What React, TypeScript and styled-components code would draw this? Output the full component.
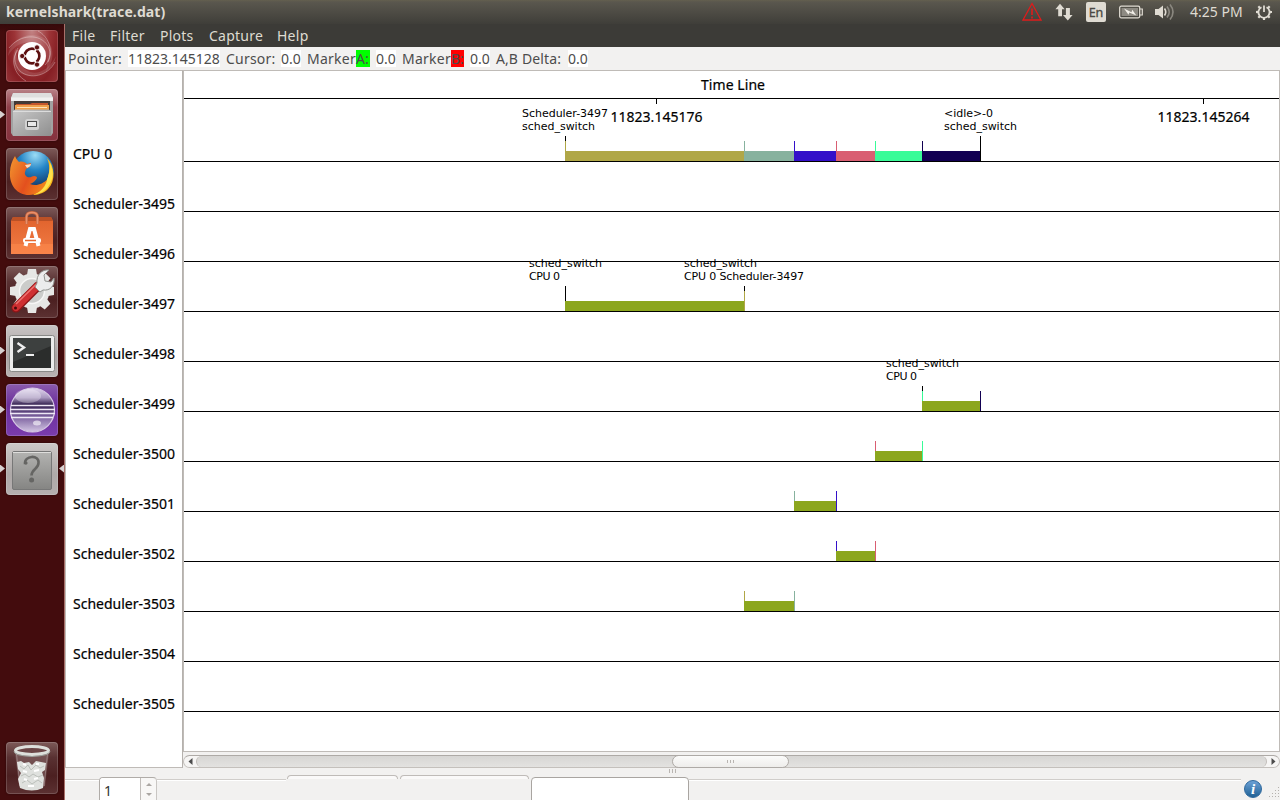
import React from "react";
import styled, { createGlobalStyle } from "styled-components";

const Global = createGlobalStyle`
  * { box-sizing: border-box; }
  body { margin: 0; overflow: hidden; background: #f2f1f0; }
  body, input { font-family: "Noto Sans", "Open Sans", sans-serif; font-size: 14px; }
`;

const Desktop = styled.div`
  width: 1280px;
  height: 800px;
  display: flex;
  flex-direction: column;
  overflow: hidden;
`;

const TopPanel = styled.header`
  height: 24px;
  flex: none;
  display: flex;
  align-items: center;
  justify-content: space-between;
  padding: 0 7px 0 6px;
  background: linear-gradient(#64604f 0, #5a574e 2px, #3f3e39 100%);
  color: #dfdbd2;
`;

const WindowTitle = styled.div`
  font-weight: 700;
  line-height: 24px;
  letter-spacing: 0.1px;
`;

const Indicators = styled.div`
  display: flex;
  align-items: center;
  height: 24px;
`;

const Indicator = styled.svg<{ $gap: number }>`
  display: block;
  flex: none;
  margin-right: ${(p) => p.$gap}px;
`;

const Keyboard = styled.div`
  width: 20px;
  height: 20px;
  margin-right: 13px;
  border-radius: 2px;
  background: #dfdbd2;
  color: #4a4842;
  font-size: 12.5px;
  line-height: 21px;
  text-align: center;
  -webkit-text-stroke: 0.3px #4a4842;
`;

const Clock = styled.div`
  width: 53px;
  margin-right: 12px;
  line-height: 24px;
  letter-spacing: 0;
  white-space: nowrap;
`;

const Body = styled.div`
  flex: 1;
  display: flex;
  min-height: 0;
`;

const Dock = styled.nav`
  width: 65px;
  flex: none;
  display: flex;
  flex-direction: column;
  gap: 7px;
  padding: 6px 0 6px 0;
  background: linear-gradient(#35090a 0, #430c0d 8px, #430c0d 100%);
  border-right: 1px solid #a9706a;
`;

const Launcher = styled.div<{ $last?: boolean }>`
  display: flex;
  align-items: center;
  height: 52px;
  flex: none;
  margin-top: ${(p) => (p.$last ? "auto" : 0)};
`;

const Arrow = styled.i<{ $side: "left" | "right"; $on?: boolean }>`
  width: ${(p) => (p.$side === "left" ? 5 : 5)}px;
  margin-right: ${(p) => (p.$side === "left" ? 1 : 0)}px;
  margin-left: ${(p) => (p.$side === "right" ? 1 : 0)}px;
  height: 8px;
  margin-top: -1px;
  clip-path: ${(p) => (p.$side === "left" ? "polygon(0 0,100% 50%,0 100%)" : "polygon(100% 0,0 50%,100% 100%)")};
  background: ${(p) => (p.$on ? "#d6d0d0" : "transparent")};
`;

const Tile = styled.div<{ $bg: string }>`
  width: 52px;
  height: 52px;
  flex: none;
  border-radius: 4px;
  background: ${(p) => p.$bg};
  box-shadow: inset 0 0 0 1px rgba(255, 255, 255, 0.16), 0 0 2px rgba(0, 0, 0, 0.5);
  svg { display: block; }
`;

const Window = styled.main`
  flex: 1;
  min-width: 0;
  display: flex;
  flex-direction: column;
  background: #f2f1f0;
`;

const MenuBar = styled.div`
  height: 23px;
  flex: none;
  display: flex;
  padding-left: 7px;
  background: #3c3b37;
  color: #dfdbd2;
`;

const MenuItem = styled.div<{ $w: number }>`
  width: ${(p) => p.$w}px;
  line-height: 23px;
  letter-spacing: 0.25px;
`;

const InfoBar = styled.div`
  height: 23px;
  flex: none;
  display: flex;
  align-items: center;
  padding-left: 3px;
  color: #4c4c4c;
`;

const Info = styled.span<{ $w: number; $gap?: number; $bg?: string; $ls?: number }>`
  width: ${(p) => p.$w}px;
  margin-right: ${(p) => p.$gap ?? 0}px;
  height: 17px;
  line-height: 17px;
  background: ${(p) => p.$bg ?? "transparent"};
  letter-spacing: ${(p) => p.$ls ?? 0}px;
  white-space: nowrap;
`;

const Trace = styled.div`
  display: flex;
  height: 698px;
  flex: none;
`;

const Names = styled.div`
  width: 118px;
  flex: none;
  padding: 58px 0 0 7px;
  border: 1px solid #bfbbb7;
  border-right-color: #b5b1ad;
  background: #fff;
  color: #000;
`;

const Name = styled.div`
  height: 50px;
  line-height: 50px;
  -webkit-text-stroke: 0.2px #000;
  white-space: nowrap;
`;

const PlotColumn = styled.div`
  flex: 1;
  display: flex;
  flex-direction: column;
`;

const PlotFrame = styled.div`
  height: 682px;
  border: 1px solid #bfbbb7;
  background: #fff;
  svg { display: block; }
`;

const ScrollBar = styled.div`
  height: 13px;
  margin-top: 3px;
  display: flex;
  border: 1px solid #c4c0bc;
  border-top-color: #aeaaa6;
  border-radius: 7px;
  background: #f6f5f4;
`;

const Step = styled.div`
  width: 12px;
  flex: none;
  display: flex;
  align-items: center;
  justify-content: center;
`;

const Trough = styled.div`
  flex: 1;
  padding-left: 475px;
  border-radius: 6px;
  border: solid #c2beba;
  border-width: 0 1px;
  background: linear-gradient(#d7d6d4, #e3e2e0);
`;

const Thumb = styled.div`
  width: 117px;
  height: 13px;
  margin-top: -1px;
  display: flex;
  align-items: center;
  justify-content: center;
  gap: 2px;
  border: 1px solid #aeaaa6;
  border-radius: 7px;
  background: linear-gradient(#fbfbfa, #eeedeb);
`;

const Ridge = styled.i<{ $h: number }>`
  width: 1px;
  height: ${(p) => p.$h}px;
  background: #b9b5b1;
`;

const Splitter = styled.div`
  height: 7px;
  flex: none;
  display: flex;
  justify-content: center;
  gap: 2px;
  padding-top: 1px;
`;

const Footer = styled.div`
  flex: 1;
  display: flex;
  align-items: flex-start;
`;

const Rule = styled.div<{ $w: number }>`
  width: ${(p) => p.$w}px;
  margin-top: 4px;
  height: 2px;
  border-top: 1px solid #d0cdca;
  background: #fff;
`;

const Spin = styled.div`
  width: 58px;
  height: 30px;
  margin-top: 2px;
  display: flex;
  border: 1px solid #b0aca8;
  border-right-color: #c9c6c3;
  border-radius: 4px;
  background: #f8f7f6;
`;

const SpinValue = styled.div`
  width: 41px;
  padding-left: 4px;
  line-height: 25px;
  border-right: 1px solid #c0bcb9;
  border-radius: 3px 0 0 3px;
  background: #fff;
  color: #333;
`;

const Spinners = styled.div`
  flex: 1;
  display: flex;
  flex-direction: column;
  align-items: center;
  gap: 7px;
  padding-top: 5px;
`;

const TabTop = styled.div<{ $w: number }>`
  width: ${(p) => p.$w}px;
  height: 4px;
  margin: 0 1px;
  border: 1px solid #bfbbb8;
  border-bottom: 0;
  border-radius: 4px 4px 0 0;
  background: #faf9f9;
`;

const Entry = styled.div`
  width: 158px;
  height: 30px;
  margin: 2px 0 0 1px;
  border: 1px solid #a9a5a1;
  border-radius: 4px;
  background: #fff;
`;

const rows = ["CPU 0", ...Array.from({ length: 11 }, (_, i) => `Scheduler-${3495 + i}`)];

const olive = "#b0a747";
const sage = "#87b29e";
const blue = "#3410c9";
const rose = "#d95e72";
const mint = "#38fc98";
const navy = "#120052";
const task = "#8ca61e";

type Bar = { row: number; from: number; to: number; fill: string; start: string; end?: string };

const bars: Bar[] = [
  { row: 0, from: 565, to: 744, fill: olive, start: olive },
  { row: 0, from: 744, to: 794, fill: sage, start: sage },
  { row: 0, from: 794, to: 836, fill: blue, start: blue },
  { row: 0, from: 836, to: 875, fill: rose, start: rose },
  { row: 0, from: 875, to: 922, fill: mint, start: mint },
  { row: 0, from: 922, to: 980, fill: navy, start: navy, end: "#000" },
  { row: 3, from: 565, to: 744, fill: task, start: "#000", end: olive },
  { row: 5, from: 922, to: 980, fill: task, start: mint, end: navy },
  { row: 6, from: 875, to: 922, fill: task, start: rose, end: mint },
  { row: 7, from: 794, to: 836, fill: task, start: sage, end: blue },
  { row: 8, from: 836, to: 875, fill: task, start: blue, end: rose },
  { row: 9, from: 744, to: 794, fill: task, start: olive, end: sage },
];

// Short black stems join an event to its caption.
const stems = [
  [565, 136], [980, 136], [565, 286], [744, 286], [922, 386],
];

const captions: [number, number, string, number][] = [
  [522, 117, "Scheduler-3497", 86],
  [522, 130, "sched_switch", 73],
  [944, 117, "<idle>-0", 49],
  [944, 130, "sched_switch", 73],
  [529, 267, "sched_switch", 73],
  [529, 280, "CPU 0", 31],
  [684, 267, "sched_switch", 73],
  [684, 280, "CPU 0 Scheduler-3497", 120],
  [886, 367, "sched_switch", 73],
  [886, 380, "CPU 0", 31],
];

const baseline = (row: number) => 161 + row * 50;

function Timeline() {
  return (
    <svg width="1095" height="680" viewBox="184 71 1095 680">
      <g fontSize="14" fill="#000" stroke="#000" strokeWidth=".2">
        <text x="701" y="90" textLength="64">Time Line</text>
        <text x="610.5" y="122" textLength="92">11823.145176</text>
        <text x="1157.5" y="122" textLength="92">11823.145264</text>
      </g>
      <g fontFamily="DejaVu Sans" fontSize="11" fill="#000">
        {captions.map(([x, y, text, w], i) => (
          <text key={i} x={x} y={y} textLength={w}>{text}</text>
        ))}
      </g>
      <g shapeRendering="crispEdges">
        <rect x="184" y="98" width="1095" height="1" />
        <rect x="656" y="99" width="1" height="5" />
        <rect x="1203" y="99" width="1" height="5" />
        {bars.map((b, i) => {
          const y = baseline(b.row);
          return (
            <g key={i}>
              <rect x={b.from} y={y - 10} width={b.to - b.from} height="10" fill={b.fill} />
              <rect x={b.from} y={y - 20} width="1" height="10" fill={b.start} />
              {b.end && <rect x={b.to} y={y - 20} width="1" height="20" fill={b.end} />}
            </g>
          );
        })}
        {stems.map(([x, y], i) => <rect key={i} x={x} y={y} width="1" height="5" />)}
        {rows.map((r, i) => <rect key={r} x="184" y={baseline(i)} width="1095" height="1" />)}
      </g>
    </svg>
  );
}

const Svg = ({ children }: { children: React.ReactNode }) => (
  <svg width="52" height="52" viewBox="0 0 52 52">{children}</svg>
);

const Dash = () => (
  <Svg>
    <path d="M2 26C4 8 24 0 38 8c12 8 10 24 2 34 3-12 0-22-8-27C20 9 9 14 2 26z" fill="#fff" opacity=".12" />
    <path d="M50 26C47 44 28 50 14 43 6 38 5 26 10 18c0 12 5 20 14 24 10 3 20-4 26-16z" fill="#fff" opacity=".12" />
    <g fill="none" stroke="#fff" strokeOpacity=".32" strokeWidth="1">
      <path d="M3 18C14 4 34 3 42 16c4 8 1 15-3 19" />
      <path d="M49 32C42 46 24 50 14 41 7 34 8 24 12 18" />
      <path d="M20 51C8 44 4 30 12 20M32 1C42 6 48 20 42 32" />
    </g>
    <circle cx="26" cy="26" r="14" fill="#fff" />
    <circle cx="26" cy="26" r="7.3" fill="none" stroke="#5c1010" strokeWidth="2.800" />
    <path d="M26 26L16 26M26 26L31 17.3M26 26L31 34.7" stroke="#fff" strokeWidth="1.600" />
    <circle cx="26" cy="26" r="5.800" fill="#fff" />
    <g fill="#5c1010" stroke="#fff" strokeWidth=".8">
      <circle cx="16.2" cy="26" r="2.600" /><circle cx="31" cy="17.4" r="2.600" /><circle cx="31" cy="34.6" r="2.600" />
    </g>
  </Svg>
);

const Files = () => (
  <Svg>
    <defs>
      <linearGradient id="cab" x2="1" y2="1"><stop stopColor="#c8c8c8" /><stop offset="1" stopColor="#8f8f8f" /></linearGradient>
    </defs>
    <path d="M7 4h38l2 5v35l-2 3H7l-2-3V9z" fill="#a2a2a2" />
    <path d="M7 4h38l2 5H5z" fill="#dedede" />
    <path d="M5 8.500h42v3.500H5z" fill="#f0f0f0" />
    <rect x="8" y="12" width="36" height="12" fill="#423a36" />
    <path d="M10 15h14l2-1h16v9H10z" fill="#c5562c" />
    <rect x="9" y="16" width="34" height="5" fill="#efa04c" />
    <rect x="11" y="18" width="30" height="1" fill="#ffe3b8" />
    <path d="M7 22l2-1.500h34l2 1.500v25H7z" fill="url(#cab)" />
    <path d="M7 22.500h38" stroke="#dcdcdc" />
    <rect x="19" y="30" width="14" height="11" rx="2.500" fill="#d2d2d2" />
    <rect x="21.500" y="32.500" width="9" height="5" fill="#e8e8e8" stroke="#4c4c4c" />
  </Svg>
);

const Firefox = () => (
  <Svg>
    <defs>
      <radialGradient id="globe" cx=".55" cy=".1" r=".8"><stop stopColor="#9bdcf5" /><stop offset=".45" stopColor="#2384c6" /><stop offset="1" stopColor="#13315f" /></radialGradient>
      <linearGradient id="fox" x1="0" x2="1" y1=".3" y2=".8"><stop stopColor="#f08a2c" /><stop offset=".5" stopColor="#e3501e" /><stop offset="1" stopColor="#f28a1c" /></linearGradient>
    </defs>
    <circle cx="27" cy="24" r="21" fill="url(#globe)" />
    <path d="M41 10c8 8 9 23 1 31-4 4-10 6-15 6 7-5 12-9 14-15 3-8 3-15 0-22z" fill="#f7b41c" />
    <path d="M44 15c4 8 4 16-2 24-4 5-9 7-13 7 10-7 15-17 15-31z" fill="#ffe14a" />
    <path d="M9 8c1 3 3 5 4 6 3-1 6 0 8 2l4-1c0 3-2 5-5 6l-1 3c-1 4 3 6 6 5 3-2 6-1 6 1-1 2-4 5-7 6 7 3 13-1 17-4-2 9-10 15-18 15C11 47 3 37 4 24c0-6 2-11 5-16z" fill="url(#fox)" />
    <path d="M19 17l6-1c0 2-2 3-4 4z" fill="#f7ddc5" />
  </Svg>
);

const Software = () => (
  <Svg>
    <defs><linearGradient id="bag" x2="0" y2="1"><stop stopColor="#e0622c" /><stop offset="1" stopColor="#f27c45" /></linearGradient></defs>
    <path d="M7 10h38l2 4v33H5V14z" fill="url(#bag)" />
    <path d="M7 10h38l2 4H5z" fill="#bb5126" />
    <path d="M5 37h42v10H5z" fill="#ff8c4e" opacity=".5" />
    <path d="M20.500 17v-7q0-4.500 5.500-4.500t5.500 4.500v7" fill="none" stroke="#c9673f" strokeWidth="3" />
    <path d="M20.500 17v-7q0-4.500 5.500-4.500t5.500 4.500v7" fill="none" stroke="#e98f6a" strokeWidth="1.500" />
    <path d="M19.500 39l4.500-17h4l4.500 17" fill="none" stroke="#fff" strokeWidth="4" />
    <rect x="17" y="31" width="18" height="5" rx="2" fill="#fff" />
    <path d="M19 33.500h11" stroke="#e66a32" strokeWidth="1.500" />
  </Svg>
);

const Settings = () => (
  <Svg>
    <g fill="#e6e7e5">
      {Array.from({ length: 8 }, (_, i) => <path key={i} d="M20.500 12l1.500-9h8l1.500 9z" transform={`rotate(${i * 45} 26 25)`} />)}
      <circle cx="26" cy="25" r="17.500" />
    </g>
    <circle cx="26" cy="25" r="12.500" fill="#cbccca" stroke="#f6f6f5" strokeWidth="1.500" />
    <path d="M10 42L32 20" stroke="#8d1517" strokeWidth="9" strokeLinecap="round" />
    <path d="M10 41.500L31.500 20" stroke="#cf2f31" strokeWidth="7" strokeLinecap="round" />
    <path d="M10 38L30 18.500" stroke="#ee7472" strokeWidth="1.500" />
    <path d="M31 17c-1-8 5-14 12-13l-5 5 1 6 6 1 3-4c1 8-4 13-11 12l-3 2-5-5z" fill="#eceded" stroke="#90928e" strokeWidth="1" />
    <circle cx="9.500" cy="42" r="1.500" fill="#4b0b0c" />
  </Svg>
);

const Terminal = () => (
  <Svg>
    <rect x="3.500" y="10.500" width="45" height="36" rx="2" fill="#ececeb" stroke="#8a8a88" />
    <rect x="7" y="13" width="38" height="30" fill="#2b2d2c" />
    <path d="M7 13h38v8L7 37z" fill="#444746" opacity=".75" />
    <path d="M11.500 18l6.500 4.500-6.500 4.500" fill="none" stroke="#eee" strokeWidth="2.400" />
    <path d="M20 30h8" stroke="#eee" strokeWidth="2" />
  </Svg>
);

const Eclipse = () => (
  <Svg>
    <defs>
      <linearGradient id="orb" x2="0" y2="1"><stop stopColor="#e2d9ef" /><stop offset=".22" stopColor="#a897bf" /><stop offset=".38" stopColor="#33204e" /><stop offset=".65" stopColor="#7b609e" /><stop offset="1" stopColor="#d3c6e3" /></linearGradient>
    </defs>
    <circle cx="26.500" cy="26" r="22" fill="url(#orb)" stroke="#d6c9e4" strokeWidth="1.200" />
    <ellipse cx="22" cy="12" rx="13" ry="7" fill="#fff" opacity=".3" />
    <path d="M5 21.500h43M4 25.500h45M4 29.500h45M5 33.500h42" stroke="#eee8f5" strokeWidth="1.500" />
    <ellipse cx="31" cy="39" rx="4" ry="2.500" fill="#fff" opacity=".6" />
  </Svg>
);

const Unknown = () => (
  <Svg>
    <defs><linearGradient id="plate" x2="0" y2="1"><stop stopColor="#b3b3b1" /><stop offset="1" stopColor="#858583" /></linearGradient></defs>
    <rect x="6.500" y="8.500" width="39" height="38" rx="1.500" fill="url(#plate)" stroke="#777" />
    <path d="M7 9.500h38" stroke="#dededc" />
    <path d="M19 21c-1-9 14.500-9.500 13.500-1 0 6-7 6-7 12.500" fill="none" stroke="#656563" strokeWidth="2.600" />
    <circle cx="19.800" cy="20" r="1.800" fill="#656563" />
    <circle cx="25.600" cy="37" r="2.500" fill="#656563" />
  </Svg>
);

const Trash = () => (
  <Svg>
    <path d="M9 10l4 34q13 7 26 0l4-34z" fill="#c9b9b9" opacity=".25" />
    <path d="M11 20l4-1 3 2 5-1 3 3 4-4 5 1 5 1-1 7-3 2 2 6-1 10q-11 5-23 0l-2-9 3-6-3-4z" fill="#dfe1de" />
    <path d="M14 24l4 3 4-4 3 5 5-5 4 3 4-2M15 34l4-2 4 3 4-3 5 3 5-2M16 41l5-3 5 4 6-4 4 3" fill="none" stroke="#bcc0bb" strokeWidth="1" />
    <path d="M17 29l4 1M28 29l5-1M18 37l3 1M28 37l4-1M22 44l6 0M30 22l3 0M17 22l3 1" stroke="#fff" strokeWidth="2" />
    <path d="M10.500 12l3.500 32M41.500 12l-3.500 32" stroke="#fff" strokeOpacity=".25" />
    <ellipse cx="26" cy="8.500" rx="16.500" ry="4" fill="#6b4546" stroke="#dddfdb" strokeWidth="3" />
    <path d="M8 9.500q0 4 18 5 18-1 18-5" fill="none" stroke="#9fa39e" />
  </Svg>
);

const glass = "linear-gradient(#7d5a59 0, #593132 30%, #4c2021 65%, #5c3132 100%)";
const launchers = [
  { icon: <Dash />, bg: "radial-gradient(ellipse at 50% 0, #c38485 0, #9c3336 48%, #861f24 75%, #963438 100%)" },
  { icon: <Files />, bg: "linear-gradient(#b98288, #8f3f49 35%, #86323e)", left: true },
  { icon: <Firefox />, bg: glass },
  { icon: <Software />, bg: glass },
  { icon: <Settings />, bg: glass },
  { icon: <Terminal />, bg: "linear-gradient(#c9c4c4, #aaa3a3 60%, #b9b2b2)", left: true },
  { icon: <Eclipse />, bg: "linear-gradient(#8a5bad, #6c2f9c 40%, #7a3cad)", left: true },
  { icon: <Unknown />, bg: "linear-gradient(#cdc9c8, #aea9a8 60%, #b5afaf)", left: true, right: true },
  { icon: <Trash />, bg: glass, last: true },
];

function StatusIcons() {
  return (
    <Indicators>
      <Indicator $gap={13} width="20" height="20" viewBox="0 0 20 20">
        <path d="M10 1.500L19 18H1z" fill="none" stroke="#e01b1b" strokeWidth="1.300" />
        <path d="M10 6.500v6.500M10 14.500v2" stroke="#e01b1b" strokeWidth="1.600" />
      </Indicator>
      <Indicator $gap={13} width="18" height="18" viewBox="0 0 18 18" fill="#dfdbd2">
        <path d="M5 .8L9.700 6.300H7v7H3.200v-7H.4zM12.800 17.400l4.800-5.500h-2.700V5h-4v6.900H8z" />
      </Indicator>
      <Keyboard>En</Keyboard>
      <Indicator $gap={11} width="24" height="14" viewBox="0 0 24 14">
        <rect x=".7" y="1.200" width="20" height="11.600" rx="1.500" fill="none" stroke="#dfdbd2" strokeWidth="1.300" />
        <rect x="2.500" y="3" width="16.500" height="8" fill="#8d8a82" />
        <path d="M21 4h2.300v6H21" fill="none" stroke="#dfdbd2" strokeWidth="1.200" />
        <path d="M5 3.500l7.500 3.800.8-2.600 4 5.800-7-3-.8 2.200z" fill="#f2efe8" />
      </Indicator>
      <Indicator $gap={15} width="21" height="18" viewBox="0 0 21 18">
        <path d="M1 6h3.500L9 2.500v13L4.500 12H1z" fill="#dfdbd2" />
        <path d="M10.500 5.500q2.500 3.500 0 7" fill="none" stroke="#dfdbd2" strokeWidth="1.600" />
        <path d="M13 3.500q4.500 5.500 0 11M16 1.500q6 7.500 0 15" fill="none" stroke="#8b8880" strokeWidth="1.600" />
      </Indicator>
      <Clock>4:25 PM</Clock>
      <Indicator $gap={0} width="18" height="18" viewBox="0 0 18 18" fill="none" stroke="#dfdbd2">
        <path d="M6.500 4.200a5.600 5.600 0 1 0 5 0" strokeWidth="1.800" />
        <path d="M9 2.500v6.500" strokeWidth="1.800" />
        {[45, 90, 135, 180, 225, 270, 315].map((a) => (
          <path key={a} d="M9 1v2.600" strokeWidth="2.200" transform={`rotate(${a} 9 9)`} />
        ))}
      </Indicator>
    </Indicators>
  );
}

const Grip = styled.svg`
  display: block;
  margin: 12px 0 0 6px;
`;

const InfoIcon = styled.svg`
  display: block;
  margin: 4px 0 0 2px;
`;

export default function App() {
  return (
    <Desktop>
      <Global />
      <TopPanel>
        <WindowTitle>kernelshark(trace.dat)</WindowTitle>
        <StatusIcons />
      </TopPanel>
      <Body>
        <Dock>
          {launchers.map((l, i) => (
            <Launcher key={i} $last={l.last}>
              <Arrow $side="left" $on={l.left} />
              <Tile $bg={l.bg}>{l.icon}</Tile>
              <Arrow $side="right" $on={l.right} />
            </Launcher>
          ))}
        </Dock>
        <Window>
          <MenuBar>
            <MenuItem $w={38}>File</MenuItem>
            <MenuItem $w={50}>Filter</MenuItem>
            <MenuItem $w={49}>Plots</MenuItem>
            <MenuItem $w={68}>Capture</MenuItem>
            <MenuItem $w={60}>Help</MenuItem>
          </MenuBar>
          <InfoBar>
            <Info $w={54} $gap={6} $ls={0.3}>Pointer:</Info>
            <Info $w={92} $gap={6} $bg="#fff">11823.145128</Info>
            <Info $w={49} $gap={6} $ls={0.2}>Cursor:</Info>
            <Info $w={20} $gap={6} $bg="#fff">0.0</Info>
            <Info $w={49} $ls={0.25}>Marker</Info>
            <Info $w={14} $gap={6} $bg="#0f0">A:</Info>
            <Info $w={20} $gap={6} $bg="#fff">0.0</Info>
            <Info $w={49} $ls={0.25}>Marker</Info>
            <Info $w={13} $gap={6} $bg="#f00">B:</Info>
            <Info $w={20} $gap={6} $bg="#fff">0.0</Info>
            <Info $w={26}>A,B</Info>
            <Info $w={40} $gap={6} $ls={0.1}>Delta:</Info>
            <Info $w={20} $bg="#fff">0.0</Info>
          </InfoBar>
          <Trace>
            <Names>
              {rows.map((r) => <Name key={r}>{r}</Name>)}
            </Names>
            <PlotColumn>
              <PlotFrame><Timeline /></PlotFrame>
              <ScrollBar>
                <Step><svg width="5" height="7"><path d="M4.500 0v7L.5 3.500z" fill="#4c4c4c" /></svg></Step>
                <Trough>
                  <Thumb><Ridge $h={3} /><Ridge $h={3} /><Ridge $h={3} /></Thumb>
                </Trough>
                <Step><svg width="5" height="7"><path d="M.5 0v7l4-3.500z" fill="#4c4c4c" /></svg></Step>
              </ScrollBar>
            </PlotColumn>
          </Trace>
          <Splitter><Ridge $h={4} /><Ridge $h={4} /><Ridge $h={4} /></Splitter>
          <Footer>
            <Rule $w={34} />
            <Spin>
              <SpinValue>1</SpinValue>
              <Spinners>
                <svg width="6" height="3"><path d="M0 3h6L3 0z" fill="#aaa6a2" /></svg>
                <svg width="6" height="3"><path d="M0 0h6L3 3z" fill="#aaa6a2" /></svg>
              </Spinners>
            </Spin>
            <Rule $w={129} />
            <TabTop $w={111} />
            <TabTop $w={129} />
            <Entry />
            <Rule $w={552} />
            <InfoIcon width="20" height="20" viewBox="0 0 20 20">
              <defs><linearGradient id="info" x2="0" y2="1"><stop stopColor="#6fa3d8" /><stop offset="1" stopColor="#1d5f93" /></linearGradient></defs>
              <circle cx="10" cy="10" r="8.500" fill="url(#info)" stroke="#316a9e" />
              <text x="10" y="15" textAnchor="middle" fontFamily="Liberation Serif, serif" fontStyle="italic" fontWeight="700" fontSize="15" fill="#fff">i</text>
            </InfoIcon>
            <Grip width="11" height="11" fill="#b5b1ad">
              {[[9, 0], [9, 3], [6, 3], [9, 6], [6, 6], [3, 6], [9, 9], [6, 9], [3, 9], [0, 9]].map(([x, y]) => (
                <rect key={`${x}-${y}`} x={x} y={y} width="1" height="1" />
              ))}
            </Grip>
          </Footer>
        </Window>
      </Body>
    </Desktop>
  );
}
